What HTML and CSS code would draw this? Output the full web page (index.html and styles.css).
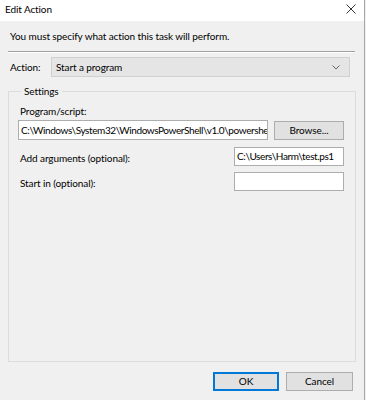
FILE: index.html
```html
<!DOCTYPE html>
<html lang="en">
<head>
    <meta charset="UTF-8">
    <meta name="viewport" content="width=device-width, initial-scale=1.0">
    <title>Edit Action</title>
    <link rel="stylesheet" href="styles.css">
</head>
<body>
    <div class="window">
        <div class="titlebar">
            <span class="title">Edit Action</span>
            <svg class="close" width="10" height="10" viewBox="0 0 10 10">
                <path d="M0.5 0.5 L9.5 9.5 M9.5 0.5 L0.5 9.5" stroke="#333" stroke-width="1" fill="none"/>
            </svg>
        </div>
        <div class="body">
            <div class="intro">You must specify what action this task will perform.</div>
            <div class="separator"></div>
            <div class="action-row">
                <span class="action-label">Action:</span>
                <div class="select">
                    <span>Start a program</span>
                    <svg width="8" height="5" viewBox="0 0 8 5">
                        <path d="M0.5 0.5 L4 4 L7.5 0.5" stroke="#666" stroke-width="1" fill="none"/>
                    </svg>
                </div>
            </div>
            <fieldset class="settings">
                <legend>Settings</legend>
                <div class="label program-label">Program/script:</div>
                <div class="program-row">
                    <div class="input program-input">C:\Windows\System32\WindowsPowerShell\v1.0\powershe</div>
                    <div class="button browse">Browse...</div>
                </div>
                <div class="field-row first">
                    <span class="label">Add arguments (optional):</span>
                    <div class="input small-input">C:\Users\Harm\test.ps1</div>
                </div>
                <div class="field-row">
                    <span class="label">Start in (optional):</span>
                    <div class="input small-input"></div>
                </div>
            </fieldset>
            <div class="footer">
                <div class="button ok">OK</div>
                <div class="button cancel">Cancel</div>
            </div>
        </div>
    </div>
</body>
</html>
```

FILE: styles.css
```css
body {
    margin: 0;
    background: #f0f0f0;
    font-family: Lato, "Noto Sans", sans-serif;
    font-size: 10px;
    letter-spacing: -0.1px;
    color: #000;
}
.window {
    width: 364px;
    height: 400px;
    border-right: 1px solid #a8a8a8;
    display: flex;
    flex-direction: column;
}
.titlebar {
    height: 21px;
    background: #fff;
    display: flex;
    align-items: center;
    justify-content: space-between;
    padding: 0 8px 3px 5px;
    box-sizing: border-box;
}
.body {
    flex: 1;
    padding: 0 8px;
    display: flex;
    flex-direction: column;
}
.intro {
    height: 30px;
    line-height: 30px;
    padding-left: 2px;
}
.separator {
    height: 1px;
    background: #a0a0a0;
    border-bottom: 1px solid #fff;
    margin-right: 1px;
}
.action-row {
    display: flex;
    align-items: center;
    margin-top: 4px;
    height: 20px;
}
.action-label {
    width: 41px;
    padding-left: 2px;
}
.select {
    width: 299px;
    height: 20px;
    box-sizing: border-box;
    background: #e5e5e5;
    border: 1px solid #d0d0d0;
    display: flex;
    align-items: center;
    justify-content: space-between;
    padding: 0 9px 0 4px;
}
.settings {
    margin: 8px 0 0 0;
    padding: 0 10px 0 9px;
    height: 277px;
    box-sizing: border-box;
    border: 1px solid #dcdcdc;
    width: 348px;
}
.settings legend {
    padding: 0 3px;
    margin-left: 3px;
}
.program-label {
    margin-top: 8px;
    padding-left: 2px;
}
.program-row {
    display: flex;
    align-items: center;
    gap: 6px;
    margin-top: 3px;
}
.input {
    height: 20px;
    box-sizing: border-box;
    background: #fff;
    border: 1px solid #adadad;
    padding: 0 2px;
    line-height: 18px;
    letter-spacing: -0.4px;
    white-space: nowrap;
    overflow: hidden;
}
.program-input {
    width: 250px;
    flex-shrink: 0;
}
.button {
    height: 19px;
    box-sizing: border-box;
    background: #e1e1e1;
    border: 1px solid #adadad;
    text-align: center;
    line-height: 17px;
}
.browse {
    width: 70px;
}
.field-row {
    display: flex;
    align-items: center;
    justify-content: space-between;
    margin-top: 6px;
    padding-left: 2px;
    padding-right: 1px;
}
.field-row.first {
    margin-top: 7px;
}
.field-row .label {
    padding-top: 3px;
}
.small-input {
    width: 110px;
    height: 19px;
    line-height: 17px;
}
.footer {
    display: flex;
    justify-content: flex-end;
    gap: 7px;
    margin-top: 10px;
    padding-right: 3px;
}
.ok {
    width: 66px;
    border: 2px solid #0078d7;
    line-height: 15px;
}
.cancel {
    width: 67px;
}
```
